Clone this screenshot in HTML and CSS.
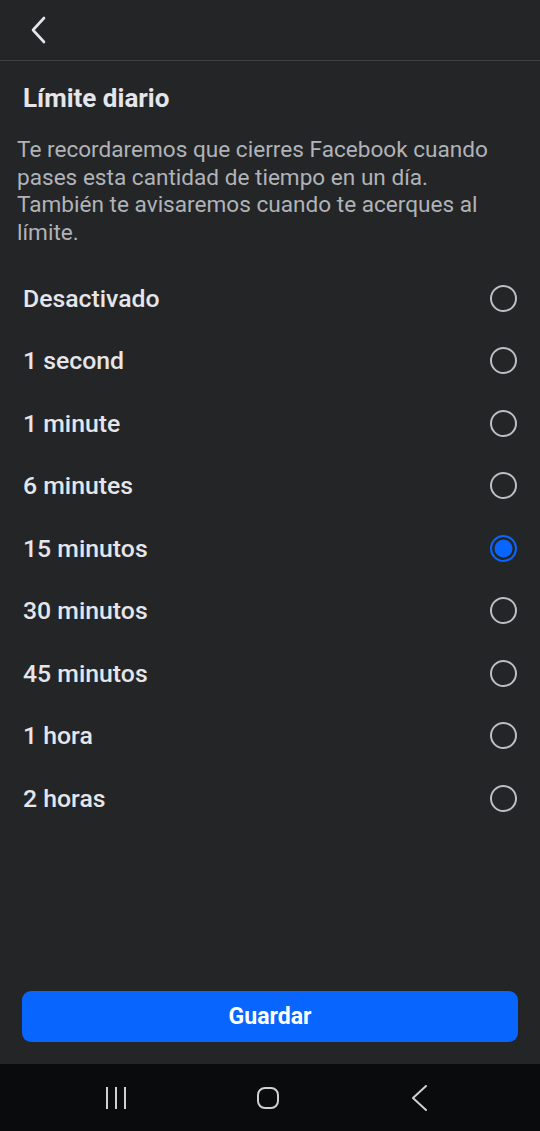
FILE: index.html
```html
<!DOCTYPE html>
<html lang="es">

<head>
    <meta charset="UTF-8">
    <meta name="viewport" content="width=device-width, initial-scale=1.0">
    <title>Límite diario</title>
    <link rel="stylesheet" href="styles.css">
</head>

<body>
    <div class="screen">
        <div class="topbar">
            <button class="back">
                <svg width="16" height="28" viewBox="0 0 16 28">
                    <path d="M14 2 L3 14 L14 26" fill="none" stroke="#e4e6eb" stroke-width="2.6" stroke-linecap="round" stroke-linejoin="round" />
                </svg>
            </button>
        </div>

        <div class="content">
            <h4 class="title">Límite diario</h4>
            <p class="desc">Te recordaremos que cierres Facebook cuando pases esta cantidad de tiempo en un día. También te avisaremos cuando te acerques al límite.</p>

            <div class="options">
                <div class="option"><span>Desactivado</span><i class="radio"></i></div>
                <div class="option"><span>1 second</span><i class="radio"></i></div>
                <div class="option"><span>1 minute</span><i class="radio"></i></div>
                <div class="option"><span>6 minutes</span><i class="radio"></i></div>
                <div class="option"><span>15 minutos</span><i class="radio checked"></i></div>
                <div class="option"><span>30 minutos</span><i class="radio"></i></div>
                <div class="option"><span>45 minutos</span><i class="radio"></i></div>
                <div class="option"><span>1 hora</span><i class="radio"></i></div>
                <div class="option"><span>2 horas</span><i class="radio"></i></div>
            </div>
        </div>

        <div class="footer">
            <button class="save">Guardar</button>
        </div>

        <div class="navbar">
            <svg class="nav-icon" width="24" height="24" viewBox="0 0 24 24">
                <path d="M3 1 V23 M12 1 V23 M21 1 V23" stroke="#cfd0d2" stroke-width="2" />
            </svg>
            <svg class="nav-icon" width="24" height="24" viewBox="0 0 24 24">
                <rect x="2" y="2" width="20" height="20" rx="7" fill="none" stroke="#cfd0d2" stroke-width="2" />
            </svg>
            <svg class="nav-icon" width="24" height="26" viewBox="0 0 24 26">
                <path d="M18 1 L5 13 L18 25" fill="none" stroke="#cfd0d2" stroke-width="2" stroke-linecap="round" stroke-linejoin="round" />
            </svg>
        </div>
    </div>
</body>

</html>
```

FILE: styles.css
```css
* {
    margin: 0;
    padding: 0;
    box-sizing: border-box;
}

body {
    background-color: #242527;
    font-family: Roboto, "Noto Sans", "Liberation Sans", sans-serif;
    color: #e4e6eb;
}

.screen {
    height: 1131px;
    display: flex;
    flex-direction: column;
}

.topbar {
    height: 61px;
    border-bottom: 1px solid #3e4042;
    padding: 16px 0 0 30px;
}

.back {
    background: none;
    border: 0;
    display: block;
}

.content {
    flex: 1;
}

.title {
    font-size: 26px;
    font-weight: 700;
    line-height: 30px;
    margin: 22px 0 0 23px;
}

.desc {
    font-size: 22.6px;
    line-height: 27.5px;
    color: #b0b3b8;
    margin: 23px 34px 0 17px;
}

.options {
    margin-top: 21px;
}

.option {
    height: 62.5px;
    display: flex;
    align-items: center;
    justify-content: space-between;
    padding: 0 23px 0 23px;
    font-size: 24.8px;
    font-weight: 500;
}

.radio {
    width: 27px;
    height: 27px;
    border-radius: 50%;
    border: 2.5px solid #bcbfc3;
}

.radio.checked {
    border-color: #0866ff;
    background-color: #0866ff;
    box-shadow: inset 0 0 0 2.5px #242527;
}

.footer {
    padding: 0 22px 22px 22px;
}

.save {
    width: 100%;
    height: 51px;
    border: 0;
    border-radius: 9px;
    background-color: #0866ff;
    color: #fff;
    font-family: Roboto, "Liberation Sans", sans-serif;
    font-size: 23px;
    font-weight: 700;
}

.navbar {
    height: 67px;
    background-color: #0a0b0c;
    display: flex;
    align-items: center;
    justify-content: center;
    gap: 128px;
    padding-right: 4px;
}
```
